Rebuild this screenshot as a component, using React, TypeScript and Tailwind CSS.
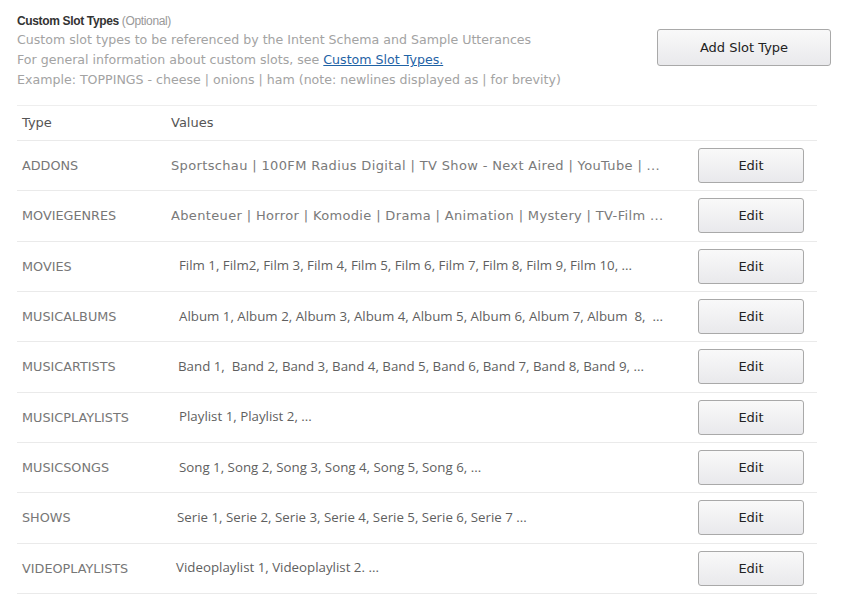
const rows: { type: string; values: string; open?: boolean; pad: string }[] = [
  { type: 'ADDONS', values: 'Sportschau | 100FM Radius Digital | TV Show - Next Aired | YouTube | ...', pad: 'pl-0' },
  { type: 'MOVIEGENRES', values: 'Abenteuer | Horror | Komodie | Drama | Animation | Mystery | TV-Film ...', pad: 'pl-0' },
  { type: 'MOVIES', values: 'Film 1, Film2, Film 3, Film 4, Film 5, Film 6, Film 7, Film 8, Film 9, Film 10, ...', open: true, pad: 'pl-[8px]' },
  { type: 'MUSICALBUMS', values: 'Album 1, Album 2, Album 3, Album 4, Album 5, Album 6, Album 7, Album  8,  ...', open: true, pad: 'pl-[8px]' },
  { type: 'MUSICARTISTS', values: 'Band 1,  Band 2, Band 3, Band 4, Band 5, Band 6, Band 7, Band 8, Band 9, ...', open: true, pad: 'pl-[7px]' },
  { type: 'MUSICPLAYLISTS', values: 'Playlist 1, Playlist 2, ...', open: true, pad: 'pl-[8px]' },
  { type: 'MUSICSONGS', values: 'Song 1, Song 2, Song 3, Song 4, Song 5, Song 6, ...', open: true, pad: 'pl-[8px]' },
  { type: 'SHOWS', values: 'Serie 1, Serie 2, Serie 3, Serie 4, Serie 5, Serie 6, Serie 7 ...', open: true, pad: 'pl-[6px]' },
  { type: 'VIDEOPLAYLISTS', values: 'Videoplaylist 1, Videoplaylist 2. ...', open: true, pad: 'pl-[5px]' },
];

const btn =
  'cursor-pointer rounded-[3px] border border-[#a9a9a9] bg-[linear-gradient(#f9f9f9,#e9e9ec)] text-[13px] text-[#222] font-["DejaVu_Sans",Verdana,sans-serif]';

export default function App() {
  return (
    <div className="min-h-screen bg-white px-[17px] pt-[13px] font-['DejaVu_Sans',Verdana,sans-serif]">
      <div className="flex w-[814px] items-start justify-between">
        <div>
          <p className="h-[17px] font-['Liberation_Sans',Arial,sans-serif] text-[12px] leading-[17px] tracking-[-0.35px]">
            <span className="font-bold text-[#333]">Custom Slot Types</span>{' '}
            <span className="text-[#999]">(Optional)</span>
          </p>
          <div className="text-[12.6px] leading-[20px] text-[#a3a3a3]">
            <p>Custom slot types to be referenced by the Intent Schema and Sample Utterances</p>
            <p>
              For general information about custom slots, see{' '}
              <a href="#" className="text-[#1f63a6] underline">
                Custom Slot Types.
              </a>
            </p>
            <p>Example: TOPPINGS - cheese | onions | ham (note: newlines displayed as | for brevity)</p>
          </div>
        </div>
        <button type="button" className={`${btn} mt-[16px] h-[37px] w-[174px]`}>
          Add Slot Type
        </button>
      </div>

      <div className="mt-[15px] w-[800px] border-t border-[#eeeeee]">
        <div className="flex h-[35px] items-center border-b border-[#eaeaea] text-[13px] text-[#555]">
          <span className="w-[154px] pl-[5px]">Type</span>
          <span>Values</span>
        </div>
        {rows.map((row) => (
          <div key={row.type} className="flex h-[50.33px] items-center border-b border-[#eaeaea]">
            <span className="w-[154px] shrink-0 pl-[5px] text-[12.8px] text-[#777]">{row.type}</span>
            <span
              className={`flex-1 truncate whitespace-pre ${row.pad} ${
                row.open
                  ? "font-['Open_Sans',sans-serif] text-[13.3px] text-[#5f5f5f]"
                  : 'text-[13px] tracking-[0.35px] text-[#7a7a7a]'
              }`}
            >
              {row.values}
            </span>
            <button type="button" className={`${btn} mr-[13px] h-[35px] w-[106px] shrink-0`}>
              Edit
            </button>
          </div>
        ))}
      </div>
    </div>
  );
}
